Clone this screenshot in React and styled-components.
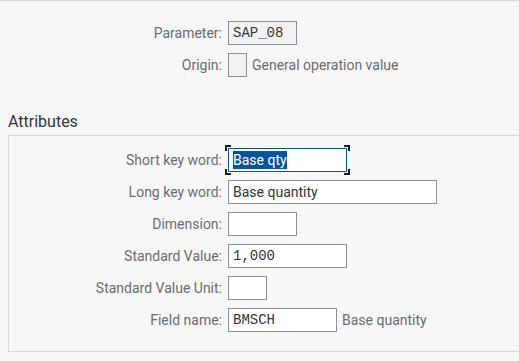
import styled, { createGlobalStyle, css } from "styled-components";

const GlobalStyle = createGlobalStyle`
  html, body {
    margin: 0;
    background: #f7f7f7;
  }
  body {
    font-family: Roboto, "Liberation Sans", sans-serif;
    color: #32363a;
  }
`;

const Page = styled.div`
  border-top: 1px solid #d9d9d9;
  min-height: 360px;
`;

const Form = styled.div`
  display: grid;
  grid-template-columns: ${(p) => p.$labelWidth}px 1fr;
  column-gap: 6px;
  row-gap: 8px;
  align-items: center;
`;

const TopForm = styled(Form)`
  padding: 20px 0 0 8px;
`;

const Label = styled.div`
  text-align: right;
  font-size: 14px;
  color: #6a6d70;
  white-space: nowrap;
`;

const FieldRow = styled.div`
  display: flex;
  align-items: center;
  gap: 5px;
`;

const Field = styled.div`
  position: relative;
  box-sizing: border-box;
  width: ${(p) => p.$width}px;
  height: 24px;
  border: 1px solid ${(p) => (p.$focused ? "#0854a0" : "#89919a")};
  background: ${(p) => (p.$readOnly ? "#f2f2f2" : "#ffffff")};
  padding: 0 4px;
  display: flex;
  align-items: center;
  font-size: 14px;
  color: #32363a;
  ${(p) =>
    p.$mono &&
    css`
      font-family: "Liberation Mono", "DejaVu Sans Mono", monospace;
      font-size: 14px;
    `}
`;

const Selected = styled.span`
  background: #0854a0;
  color: #ffffff;
  line-height: 18px;
`;

const FocusFrame = styled.span`
  position: absolute;
  inset: -4px;
  pointer-events: none;
  background:
    linear-gradient(#1d1d1d, #1d1d1d) top left / 6px 2px no-repeat,
    linear-gradient(#1d1d1d, #1d1d1d) top left / 2px 6px no-repeat,
    linear-gradient(#1d1d1d, #1d1d1d) top right / 6px 2px no-repeat,
    linear-gradient(#1d1d1d, #1d1d1d) top right / 2px 6px no-repeat,
    linear-gradient(#1d1d1d, #1d1d1d) bottom left / 6px 2px no-repeat,
    linear-gradient(#1d1d1d, #1d1d1d) bottom left / 2px 6px no-repeat,
    linear-gradient(#1d1d1d, #1d1d1d) bottom right / 6px 2px no-repeat,
    linear-gradient(#1d1d1d, #1d1d1d) bottom right / 2px 6px no-repeat;
`;

const Hint = styled.span`
  font-size: 14px;
  color: #6a6d70;
`;

const Heading = styled.h2`
  margin: 35px 0 3px 8px;
  font-size: 16px;
  font-weight: 400;
  line-height: 20px;
  color: #32363a;
`;

const GroupBox = styled.div`
  margin-left: 8px;
  border: 1px solid #d9d9d9;
  border-right: none;
  padding: 12px 0 19px 0;
`;

const attributes = [
  { label: "Short key word:", value: "Base qty", width: 119, focused: true },
  { label: "Long key word:", value: "Base quantity", width: 209 },
  { label: "Dimension:", value: "", width: 69 },
  { label: "Standard Value:", value: "1,000", width: 119, mono: true },
  { label: "Standard Value Unit:", value: "", width: 39 },
  { label: "Field name:", value: "BMSCH", width: 109, mono: true, hint: "Base quantity" },
];

export default function App() {
  return (
    <Page>
      <GlobalStyle />
      <TopForm $labelWidth={214}>
        <Label>Parameter:</Label>
        <FieldRow>
          <Field $width={69} $readOnly $mono>SAP_08</Field>
        </FieldRow>
        <Label>Origin:</Label>
        <FieldRow>
          <Field $width={19} $readOnly />
          <Hint>General operation value</Hint>
        </FieldRow>
      </TopForm>

      <Heading>Attributes</Heading>
      <GroupBox>
        <Form $labelWidth={213}>
          {attributes.map((a) => (
            <>
              <Label key={a.label + "l"}>{a.label}</Label>
              <FieldRow key={a.label + "f"}>
                <Field $width={a.width} $mono={a.mono} $focused={a.focused}>
                  {a.focused ? <Selected>{a.value}</Selected> : a.value}
                  {a.focused && <FocusFrame />}
                </Field>
                {a.hint && <Hint>{a.hint}</Hint>}
              </FieldRow>
            </>
          ))}
        </Form>
      </GroupBox>
    </Page>
  );
}
